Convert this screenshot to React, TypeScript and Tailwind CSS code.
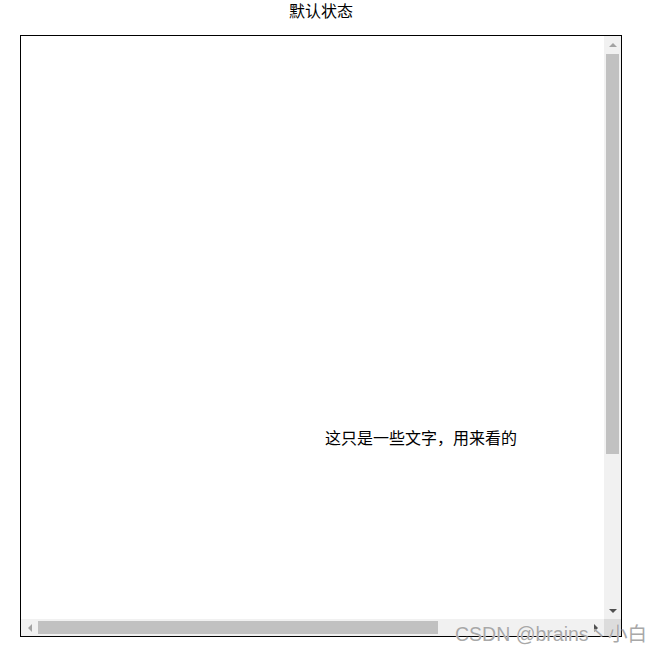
export default function App() {
	return (
		<div className="relative h-[654px] w-[655px] overflow-hidden bg-white font-['Noto_Sans_CJK_SC',sans-serif] text-black">
			<div className="ml-[20px] flex h-[35px] w-[602px] items-start justify-center pt-[1px] text-[16px] leading-[18px]">
				默认状态
			</div>

			<div className="ml-[20px] grid h-[602px] w-[602px] grid-cols-[1fr_17px] grid-rows-[1fr_17px] border border-black">
				<div className="overflow-hidden pl-[304px] pt-[390px] text-[16px] leading-[22px]">
					这只是一些文字，用来看的
				</div>

				{/* vertical scrollbar */}
				<div className="flex flex-col bg-[#f1f1f1]">
					<div className="flex h-[17px] items-center justify-center">
						<div className="h-0 w-0 border-x-[4px] border-b-[4px] border-x-transparent border-b-[#a3a3a3]" />
					</div>
					<div className="flex-1 px-[2px] pt-[1px]">
						<div className="h-[400px] bg-[#c1c1c1]" />
					</div>
					<div className="flex h-[17px] items-center justify-center">
						<div className="h-0 w-0 border-x-[4px] border-t-[4px] border-x-transparent border-t-[#505050]" />
					</div>
				</div>

				{/* horizontal scrollbar */}
				<div className="flex bg-[#f1f1f1]">
					<div className="flex w-[17px] items-center justify-center">
						<div className="h-0 w-0 border-y-[4px] border-r-[4px] border-y-transparent border-r-[#a3a3a3]" />
					</div>
					<div className="flex-1 py-[2px]">
						<div className="h-full w-[400px] bg-[#c1c1c1]" />
					</div>
					<div className="flex w-[17px] items-center justify-center">
						<div className="h-0 w-0 border-y-[4px] border-l-[4px] border-y-transparent border-l-[#505050]" />
					</div>
				</div>
				<div className="bg-[#dcdcdc]" />
			</div>

			<div className="absolute left-[455px] top-[622px] font-['Liberation_Sans','Noto_Sans_CJK_SC',sans-serif] text-[19.5px] leading-[24px] text-[#a8a8a8] [text-shadow:0_0_1px_#ffffff]">
				CSDN @brains丶小白
			</div>
		</div>
	);
}
